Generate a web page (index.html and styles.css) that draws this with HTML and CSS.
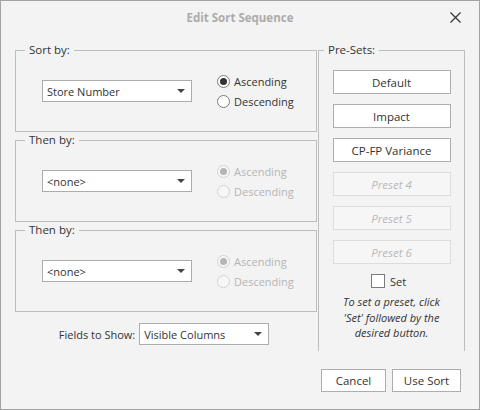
FILE: index.html
```html
<!DOCTYPE html>
<html lang="en">
<head>
    <meta charset="UTF-8">
    <title>Edit Sort Sequence</title>
    <link rel="stylesheet" href="styles.css">
</head>
<body>
    <div class="dialog">
        <div class="titlebar">
            <span></span>
            <span class="title">Edit Sort Sequence</span>
            <button class="close" title="Close">
                <svg width="11" height="11" viewBox="0 0 11 11">
                    <path d="M0.5 0.5 L10.5 10.5 M10.5 0.5 L0.5 10.5" stroke="#333" stroke-width="1.2" fill="none"/>
                </svg>
            </button>
        </div>

        <div class="content">
            <div class="sort-column">
                <fieldset class="group">
                    <legend>Sort by:</legend>
                    <div class="group-body">
                        <div class="combo">
                            <span>Store Number</span>
                            <span class="arrow"></span>
                        </div>
                        <div class="radios">
                            <label class="radio"><span class="dot checked"></span>Ascending</label>
                            <label class="radio"><span class="dot"></span>Descending</label>
                        </div>
                    </div>
                </fieldset>

                <fieldset class="group">
                    <legend>Then by:</legend>
                    <div class="group-body">
                        <div class="combo">
                            <span>&lt;none&gt;</span>
                            <span class="arrow"></span>
                        </div>
                        <div class="radios disabled">
                            <label class="radio"><span class="dot checked"></span>Ascending</label>
                            <label class="radio"><span class="dot"></span>Descending</label>
                        </div>
                    </div>
                </fieldset>

                <fieldset class="group">
                    <legend>Then by:</legend>
                    <div class="group-body">
                        <div class="combo">
                            <span>&lt;none&gt;</span>
                            <span class="arrow"></span>
                        </div>
                        <div class="radios disabled">
                            <label class="radio"><span class="dot checked"></span>Ascending</label>
                            <label class="radio"><span class="dot"></span>Descending</label>
                        </div>
                    </div>
                </fieldset>

                <div class="fields-row">
                    <span>Fields to Show:</span>
                    <div class="combo combo-fields">
                        <span>Visible Columns</span>
                        <span class="arrow"></span>
                    </div>
                </div>
            </div>

            <fieldset class="presets">
                <legend>Pre-Sets:</legend>
                <button class="btn preset">Default</button>
                <button class="btn preset">Impact</button>
                <button class="btn preset">CP-FP Variance</button>
                <button class="btn preset" disabled>Preset 4</button>
                <button class="btn preset" disabled>Preset 5</button>
                <button class="btn preset" disabled>Preset 6</button>
                <label class="check"><span class="box"></span>Set</label>
                <p class="hint">To set a preset, click 'Set' followed by the desired button.</p>
            </fieldset>
        </div>

        <div class="footer">
            <button class="btn btn-cancel">Cancel</button>
            <button class="btn btn-ok">Use Sort</button>
        </div>
    </div>
</body>
</html>
```

FILE: styles.css
```css
body {
    margin: 0;
    font-family: "Open Sans", "Noto Sans", sans-serif;
    font-size: 11px;
    color: #333;
}

.dialog {
    width: 480px;
    height: 410px;
    box-sizing: border-box;
    border: 1px solid #a3a3a3;
    background: #f3f3f3;
}

.titlebar {
    display: grid;
    grid-template-columns: 1fr auto 1fr;
    align-items: center;
    height: 32px;
}

.title {
    font-weight: bold;
    color: #ababab;
    font-size: 11.5px;
}

.close {
    justify-self: end;
    margin-right: 18px;
    padding: 0;
    border: none;
    background: none;
    width: 11px;
    height: 11px;
    display: flex;
}

.content {
    display: flex;
    padding: 9px 0 0 14px;
    height: 309px;
}

.sort-column {
    width: 302px;
    display: flex;
    flex-direction: column;
}

fieldset {
    margin: 0;
    border: 1px solid #bdbdbd;
    padding: 0;
    min-width: 0;
}

legend {
    margin-left: 9px;
    padding: 0 4px;
    line-height: 16px;
    font-size: 11.5px;
}

.group-body {
    display: flex;
    align-items: center;
    height: 73px;
    box-sizing: border-box;
    padding: 0 0 7px 26px;
    gap: 25px;
}

.combo {
    width: 150px;
    height: 22px;
    box-sizing: border-box;
    border: 1px solid #acacac;
    background: #fff;
    display: flex;
    align-items: center;
    justify-content: space-between;
    padding: 0 6px 0 4px;
}

.arrow {
    width: 0;
    height: 0;
    border-left: 4px solid transparent;
    border-right: 4px solid transparent;
    border-top: 4px solid #444;
}

.radios {
    display: flex;
    flex-direction: column;
    gap: 4px;
}

.radio {
    display: flex;
    align-items: center;
    gap: 4px;
    height: 16px;
}

.dot {
    width: 13px;
    height: 13px;
    box-sizing: border-box;
    border: 1px solid #7b7b7b;
    border-radius: 50%;
    background: #fff;
    display: flex;
    align-items: center;
    justify-content: center;
}

.dot.checked::after {
    content: "";
    width: 7px;
    height: 7px;
    border-radius: 50%;
    background: #333;
}

.radios.disabled {
    color: #b5b5b5;
}

.radios.disabled .dot {
    border-color: #d2d2d2;
    background: #f7f7f7;
}

.radios.disabled .dot.checked::after {
    background: #b5b5b5;
}

.fields-row {
    display: flex;
    align-items: center;
    justify-content: center;
    gap: 4px;
    margin-top: 11px;
    padding-right: 4px;
}

.combo-fields {
    width: 130px;
}

.presets {
    width: 147px;
    box-sizing: border-box;
    margin-left: 1px;
    border-bottom: none;
    display: flex;
    flex-direction: column;
    align-items: center;
    gap: 10px;
    padding-top: 12px;
}

.presets legend {
    margin-left: 5px;
}

.btn {
    font-family: inherit;
    font-size: 11.5px;
    color: #333;
    background: #fff;
    border: 1px solid #adadad;
    padding: 0;
    height: 24px;
}

.preset {
    width: 118px;
    margin-top: 0;
}

.preset:disabled {
    background: #f6f6f6;
    border-color: #dcdcdc;
    color: #b9b9b9;
    font-style: italic;
}

.check {
    display: flex;
    align-items: center;
    gap: 5px;
    height: 14px;
    padding-right: 6px;
}

.box {
    width: 14px;
    height: 14px;
    box-sizing: border-box;
    border: 1px solid #7b7b7b;
    background: #fff;
}

.hint {
    margin: -4px 0 0;
    padding: 0 18px;
    text-align: center;
    font-style: italic;
    line-height: 15.5px;
}

.footer {
    display: flex;
    justify-content: flex-end;
    gap: 6px;
    padding: 18px 18px 0 0;
}

.btn-cancel {
    width: 65px;
    height: 23px;
}

.btn-ok {
    width: 69px;
    height: 23px;
}
```
